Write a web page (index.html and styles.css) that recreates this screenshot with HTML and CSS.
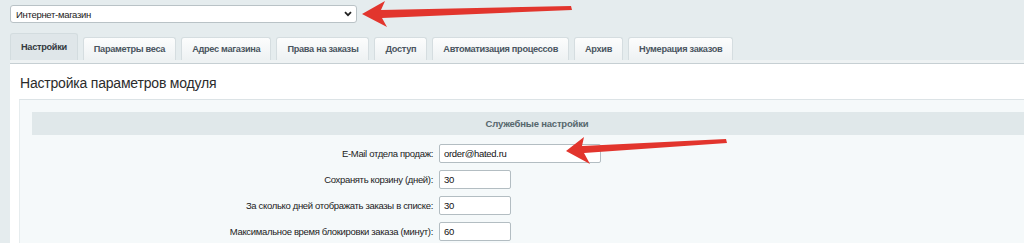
FILE: index.html
```html
<!DOCTYPE html>
<html lang="ru">
<head>
<meta charset="utf-8">
<title>Настройка параметров модуля</title>
<link rel="stylesheet" href="styles.css">
</head>
<body>
<div class="page">
  <div class="top">
    <div class="select">
      <span>Интернет-магазин</span>
      <svg class="chev" width="8" height="6" viewBox="0 0 8 6"><path d="M1 1.2 L4 4.2 L7 1.2" fill="none" stroke="#222" stroke-width="1.8"/></svg>
    </div>
  </div>
  <div class="tabs">
    <div class="tab active">Настройки</div>
    <div class="tab">Параметры веса</div>
    <div class="tab">Адрес магазина</div>
    <div class="tab">Права на заказы</div>
    <div class="tab">Доступ</div>
    <div class="tab">Автоматизация процессов</div>
    <div class="tab">Архив</div>
    <div class="tab">Нумерация заказов</div>
  </div>
  <div class="strip"></div>
  <div class="content">
    <h1 class="title">Настройка параметров модуля</h1>
    <div class="panel">
      <div class="head">Служебные настройки</div>
      <div class="rows">
        <label class="lbl">E-Mail отдела продаж:</label>
        <div class="field"><input class="inp wide" type="text" value="order@hated.ru"></div>
        <label class="lbl">Сохранять корзину (дней):</label>
        <div class="field"><input class="inp" type="text" value="30"></div>
        <label class="lbl">За сколько дней отображать заказы в списке:</label>
        <div class="field"><input class="inp" type="text" value="30"></div>
        <label class="lbl">Максимальное время блокировки заказа (минут):</label>
        <div class="field"><input class="inp" type="text" value="60"></div>
      </div>
    </div>
  </div>
</div>
<svg class="arrows" width="1024" height="243" viewBox="0 0 1024 243">
  <path d="M362 14 L385 1 L381 10 L571 6 L572 10 L382 18 L387 27 Z" fill="#e2352d"/>
  <path d="M566 151 L584 137 L582 146 L726 139 L727 143 L584 153 L590 164 Z" fill="#e2352d"/>
</svg>
</body>
</html>
```
FILE: styles.css
```css
html, body {
  margin: 0;
  padding: 0;
  overflow: hidden;
}
body {
  background: #e5ecee;
  font-family: "Liberation Sans", Arial, sans-serif;
  color: #222;
  width: 1024px;
  height: 243px;
  position: relative;
}
.page {
  width: 1024px;
  height: 243px;
  display: flex;
  flex-direction: column;
}
.top {
  padding: 5px 10px 0;
}
.select {
  width: 336px;
  height: 16px;
  background: #fff;
  border: 1px solid #b9c2c6;
  border-radius: 3px;
  display: flex;
  align-items: center;
  justify-content: space-between;
  padding: 0 4px 0 5px;
  font-size: 9.5px;
  letter-spacing: -0.3px;
  color: #222;
}
.chev {
  display: block;
}
.tabs {
  display: flex;
  align-items: flex-end;
  gap: 5px;
  padding-left: 10px;
  margin-top: 10px;
  height: 27px;
}
.tab {
  height: 22px;
  line-height: 22px;
  padding: 0 10px;
  font-size: 9.2px;
  letter-spacing: -0.3px;
  font-weight: bold;
  color: #4a5560;
  background: linear-gradient(#fcfdfd, #eef2f3);
  border: 1px solid #d5dde0;
  border-bottom: none;
  border-radius: 3px 3px 0 0;
}
.tab.active {
  height: 26px;
  line-height: 26px;
  background: #dfe6e9;
  border-color: #d3dcdf;
  color: #33393e;
}
.strip {
  height: 3px;
  margin-left: 10px;
  background: #eef2f3;
  border-bottom: 1px solid #c6cfd3;
}
.content {
  flex: 1;
  min-height: 0;
  display: flex;
  flex-direction: column;
  background: #fff;
  margin-left: 10px;
  padding-top: 9px;
}
.title {
  margin: 0;
  padding-left: 10px;
  font-size: 14px;
  letter-spacing: -0.2px;
  font-weight: normal;
  line-height: 20px;
  color: #2b2b2b;
}
.panel {
  flex: 1;
  min-height: 0;
  overflow: hidden;
  margin: 6px 0 0 9px;
  background: #f5f9fa;
  border-top: 1px solid #dce3e6;
  border-left: 1px solid #e6ecee;
  padding: 12px 0 0 12px;
}
.head {
  height: 23px;
  line-height: 23px;
  background: #e0e8ea;
  text-align: center;
  padding-left: 18px;
  font-size: 9.5px;
  letter-spacing: -0.2px;
  font-weight: bold;
  color: #56676d;
}
.rows {
  display: grid;
  grid-template-columns: 401px 1fr;
  grid-auto-rows: 26px;
  column-gap: 6px;
  padding-top: 5px;
  align-items: center;
}
.lbl {
  text-align: right;
  font-size: 9.5px;
  letter-spacing: -0.33px;
  color: #222;
}
.inp {
  display: block;
  box-sizing: border-box;
  width: 72px;
  height: 19px;
  border: 1px solid #b3bdc2;
  border-radius: 2px;
  background: #fff;
  padding: 0 4px;
  font-family: "Liberation Sans", Arial, sans-serif;
  font-size: 9.5px;
  letter-spacing: -0.3px;
  color: #111;
  outline: none;
}
.inp.wide {
  width: 162px;
}
.arrows {
  position: absolute;
  left: 0;
  top: 0;
  pointer-events: none;
}
```
